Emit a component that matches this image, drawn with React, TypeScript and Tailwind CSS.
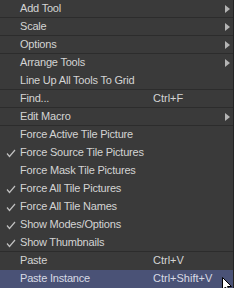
import React from "react";

type Item = {
  label: string;
  check?: boolean;
  sub?: boolean;
  shortcut?: string;
  sep?: boolean;
  active?: boolean;
};

const items: Item[] = [
  { label: "Add Tool", sub: true, sep: true },
  { label: "Scale", sub: true, sep: true },
  { label: "Options", sub: true, sep: true },
  { label: "Arrange Tools", sub: true },
  { label: "Line Up All Tools To Grid", sep: true },
  { label: "Find...", shortcut: "Ctrl+F", sep: true },
  { label: "Edit Macro", sub: true, sep: true },
  { label: "Force Active Tile Picture" },
  { label: "Force Source Tile Pictures", check: true },
  { label: "Force Mask Tile Pictures" },
  { label: "Force All Tile Pictures", check: true },
  { label: "Force All Tile Names", check: true },
  { label: "Show Modes/Options", check: true },
  { label: "Show Thumbnails", check: true, sep: true },
  { label: "Paste", shortcut: "Ctrl+V" },
  { label: "Paste Instance", shortcut: "Ctrl+Shift+V", active: true },
];

function Check() {
  return (
    <svg width="10" height="9" viewBox="0 0 10 9" className="absolute left-[6px] top-[5px]">
      <path d="M1 4.5 L3.5 7.5 L9 1" stroke="#c0c0c0" strokeWidth="1.2" fill="none" />
    </svg>
  );
}

function Arrow() {
  return (
    <svg width="5" height="8" viewBox="0 0 5 8" className="absolute left-[225px] top-[5px]">
      <path d="M0 0 L5 4 L0 8 Z" fill="#b4b4b4" />
    </svg>
  );
}

export default function App() {
  return (
    <div
      className="relative w-[234px] h-[288px] bg-[#3a3a3a] overflow-hidden border-r border-[#232323]"
      style={{ fontFamily: '"Liberation Sans", Arial, sans-serif' }}
    >
      <div className="flex flex-col">
        {items.map((it, i) => (
          <div
            key={i}
            className={
              "relative h-[18px] flex items-center text-[11px] leading-none tracking-[-0.2px] " +
              (it.active ? "bg-[#4a5276] text-[#d8dae4]" : "text-[#d4d4d4]") +
              (it.sep ? " border-b border-[#2c2c2c]" : "")
            }
          >
            {it.check && <Check />}
            <span className="absolute left-[20px] top-[3px]">{it.label}</span>
            {it.shortcut && (
              <span className="absolute left-[153px] top-[3px] tracking-[0px]">{it.shortcut}</span>
            )}
            {it.sub && <Arrow />}
          </div>
        ))}
      </div>
      <svg
        width="12"
        height="17"
        viewBox="0 0 12 17"
        className="absolute left-[222px] top-[277px]"
      >
        <path d="M0.5 0.5 L0.5 13 L3.5 10 L6 15.5 L8 14.5 L5.5 9.5 L9.5 9.5 Z" fill="#ffffff" stroke="#000000" strokeWidth="1" />
      </svg>
    </div>
  );
}
